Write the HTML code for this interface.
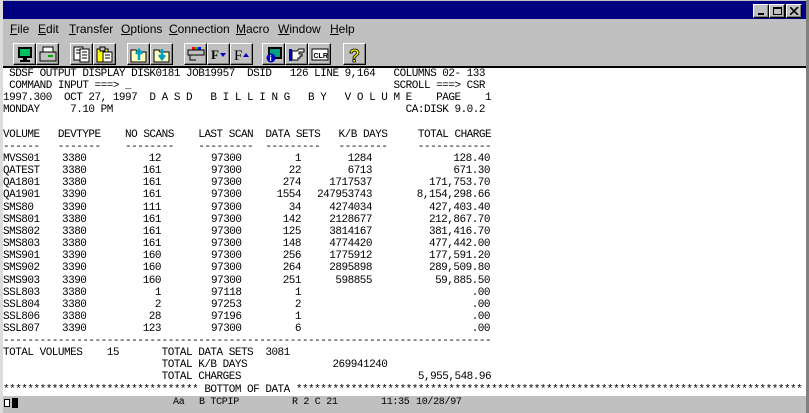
<!DOCTYPE html>
<html><head><meta charset="utf-8"><style>
*{margin:0;padding:0;box-sizing:border-box}
body{width:809px;height:413px;background:#c0c0c0;position:relative;overflow:hidden;font-family:"Liberation Sans",sans-serif}
.abs{position:absolute}
#title{left:3px;top:1px;width:803px;height:18px;background:#000080}
.wb{position:absolute;top:4px;width:16px;height:14px;background:#c0c0c0;border:1px solid;border-color:#fff #000 #000 #fff;box-shadow:inset -1px -1px #808080}
.menu span{position:absolute;top:22px;font-size:12px;color:#000}
.menu u{text-decoration:underline}
.btn{position:absolute;top:43px;width:23px;height:22px;background:#c0c0c0;border:1px solid;border-color:#fff #000 #000 #fff;box-shadow:inset -1px -1px #808080}
.btn svg{position:absolute;left:2px;top:2px}
#term{left:3px;top:66px;width:803px;height:330px;background:#fff;border-top:2px solid #000}
pre{position:absolute;font-family:"Liberation Mono",monospace;font-size:11px;letter-spacing:-0.5px;line-height:12.15px;color:#000;white-space:pre}
.r{text-align:right}
#status{left:3px;top:396px;width:803px;height:14px;background:#c0c0c0}
#status span{position:absolute;top:1px;font-family:"Liberation Mono",monospace;font-size:10px;letter-spacing:-0.3px}
</style></head><body>
<div class="abs" style="left:0;top:0;width:3px;height:413px;background:#dcdcdc"></div>
<div class="abs" style="left:806px;top:0;width:3px;height:413px;background:#808080"></div>
<div class="abs" id="title"></div>
<div class="wb" style="left:753px"><div class="abs" style="left:4px;top:8px;width:6px;height:2px;background:#000"></div></div>
<div class="wb" style="left:769px"><div class="abs" style="left:3px;top:2px;width:9px;height:8px;border:1px solid #000;border-top-width:2px"></div></div>
<div class="wb" style="left:786px"><svg class="abs" style="left:3px;top:2px" width="9" height="8"><path d="M0 0L8 8M8 0L0 8" stroke="#000" stroke-width="1.6"/></svg></div>
<div class="menu">
<span style="left:10px"><u>F</u>ile</span>
<span style="left:38px"><u>E</u>dit</span>
<span style="left:69px"><u>T</u>ransfer</span>
<span style="left:121px"><u>O</u>ptions</span>
<span style="left:169px"><u>C</u>onnection</span>
<span style="left:236px"><u>M</u>acro</span>
<span style="left:278px"><u>W</u>indow</span>
<span style="left:330px"><u>H</u>elp</span>
</div>
<div class="btn" style="left:13px"><svg width="18" height="17"><rect x="2" y="1" width="14" height="11" fill="#000"/><rect x="4" y="3" width="10" height="7" fill="#00c060"/><rect x="7" y="12" width="4" height="2" fill="#000"/><rect x="4" y="14" width="10" height="2" fill="#000"/></svg></div>
<div class="btn" style="left:36px"><svg width="18" height="17"><rect x="4" y="1" width="10" height="5" fill="#fff" stroke="#000"/><rect x="1" y="6" width="16" height="9" fill="#c0c0c0" stroke="#000"/><rect x="9" y="9" width="5" height="2" fill="#0a0"/></svg></div>
<div class="btn" style="left:70px"><svg width="18" height="17"><rect x="1" y="1" width="9" height="13" fill="#fff" stroke="#000"/><rect x="7" y="3" width="9" height="13" fill="#fff" stroke="#000"/><path d="M9 6h5M9 9h5M9 12h5M3 4h4M3 7h4" stroke="#000"/></svg></div>
<div class="btn" style="left:93px"><svg width="18" height="17"><rect x="1" y="3" width="11" height="13" fill="#ff0" stroke="#000"/><rect x="4" y="1" width="5" height="4" fill="#c0c0c0" stroke="#000"/><rect x="7" y="6" width="9" height="10" fill="#fff" stroke="#000"/><path d="M9 9h5M9 12h5" stroke="#000"/></svg></div>
<div class="btn" style="left:127px"><svg width="18" height="17"><path d="M1 4h5l1 2h9v10H1z" fill="#ffffc0" stroke="#000"/><path d="M9 14V5M6 8l3-4 3 4" stroke="#00a0c0" stroke-width="2.5" fill="none"/></svg></div>
<div class="btn" style="left:150px"><svg width="18" height="17"><path d="M1 4h5l1 2h9v10H1z" fill="#ffffc0" stroke="#000"/><path d="M9 3v9M6 9l3 4 3-4" stroke="#00a0c0" stroke-width="2.5" fill="none"/></svg></div>
<div class="btn" style="left:184px"><svg width="18" height="17"><rect x="5" y="1" width="3" height="3" fill="#f00"/><rect x="8" y="1" width="3" height="3" fill="#0c0"/><rect x="11" y="1" width="3" height="3" fill="#00f"/><rect x="1" y="4" width="16" height="5" fill="#c0c0c0" stroke="#000"/><path d="M3 9v5h6" stroke="#000" fill="none"/></svg></div>
<div class="btn" style="left:207px"><svg width="18" height="17"><text x="1" y="13" font-family="Liberation Serif" font-size="13" font-weight="bold">F</text><path d="M10 7h6l-3 4z" fill="#0000c0"/></svg></div>
<div class="btn" style="left:230px"><svg width="18" height="17"><text x="1" y="14" font-family="Liberation Serif" font-size="15">F</text><path d="M10 11h6l-3-4z" fill="#0000c0"/></svg></div>
<div class="btn" style="left:262px"><svg width="18" height="17"><rect x="3" y="1" width="14" height="12" fill="#000"/><rect x="5" y="3" width="10" height="8" fill="#00a080"/><circle cx="6" cy="12" r="4.5" fill="#0000c0"/><text x="4.5" y="15" fill="#fff" font-size="8" font-weight="bold">i</text></svg></div>
<div class="btn" style="left:285px"><svg width="18" height="17"><rect x="1" y="3" width="3" height="12" fill="#0000c0"/><path d="M4 5h5l2-2 5 0v3h-5v2h3v2h-2v2h-2v2H4z" fill="#fff" stroke="#000"/></svg></div>
<div class="btn" style="left:308px"><svg width="18" height="17"><rect x="1" y="3" width="16" height="11" fill="#fff" stroke="#000"/><text x="2.5" y="12" font-size="7" font-weight="bold" font-family="Liberation Sans">CLR</text></svg></div>
<div class="btn" style="left:343px"><svg width="18" height="17"><text x="3" y="16" font-size="18" font-weight="bold" fill="#ff0" stroke="#000" stroke-width="0.8">?</text></svg></div>
<div class="abs" id="term">
<pre style="left:0;top:0"> SDSF OUTPUT DISPLAY DISK0181 JOB19957  DSID   126 LINE 9,164   COLUMNS 02- 133
 COMMAND INPUT ===> _                                           SCROLL ===> CSR
1997.300  OCT 27, 1997  D A S D   B I L L I N G   B Y   V O L U M E    PAGE    1
MONDAY     7.10 PM                                                CA:DISK 9.0.2

VOLUME   DEVTYPE    NO SCANS    LAST SCAN  DATA SETS   K/B DAYS     TOTAL CHARGE
------   -------    --------    ---------  ---------   --------     ------------</pre>
<pre style="left:0;top:85px">MVSS01
QATEST
QA1801
QA1901
SMS80
SMS801
SMS802
SMS803
SMS901
SMS902
SMS903
SSL803
SSL804
SSL806
SSL807</pre>
<pre style="left:59px;top:85px">3380
3380
3380
3390
3390
3380
3380
3380
3390
3390
3390
3380
3380
3380
3390</pre>
<pre class="r" style="right:645px;top:85px">12
161
161
161
111
161
161
161
160
160
160
1
2
28
123</pre>
<pre style="left:208px;top:85px">97300
97300
97300
97300
97300
97300
97300
97300
97300
97300
97300
97118
97253
97196
97300</pre>
<pre class="r" style="right:505px;top:85px">1
22
274
1554
34
142
125
148
256
264
251
1
2
1
6</pre>
<pre class="r" style="right:434px;top:85px">1284
6713
1717537
247953743
4274034
2128677
3814167
4774420
1775912
2895898
598855


</pre>
<pre class="r" style="right:316px;top:85px">128.40
671.30
171,753.70
8,154,298.66
427,403.40
212,867.70
381,416.70
477,442.00
177,591.20
289,509.80
59,885.50
.00
.00
.00
.00</pre>
<pre style="left:0;top:267px">--------------------------------------------------------------------------------
TOTAL VOLUMES    15       TOTAL DATA SETS  3081
                          TOTAL K/B DAYS              269941240
                          TOTAL CHARGES                             5,955,548.96
******************************** BOTTOM OF DATA ***********************************************************************************</pre>
</div>
<div class="abs" id="status">
<div class="abs" style="left:1px;top:3px;width:6px;height:8px;border:1px solid #000;background:#fff"></div>
<div class="abs" style="left:9px;top:2px;width:6px;height:10px;background:#000"></div>
<span style="left:170px">Aa</span>
<span style="left:196px">B TCPIP</span>
<span style="left:289px">R 2  C 21</span>
<span style="left:378px">11:35</span>
<span style="left:413px">10/28/97</span>
</div>
</body></html>
